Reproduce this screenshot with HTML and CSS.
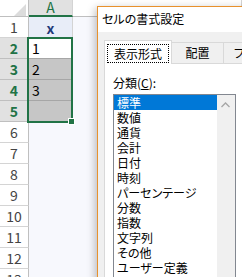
FILE: index.html
```html
<!DOCTYPE html>
<html>

<head>
    <meta charset="utf-8">
    <link rel="stylesheet" href="styles.css">
</head>

<body>
    <div class="sheet">
        <div class="corner">
            <svg width="12" height="12" viewBox="0 0 12 12"><polygon points="12,0 12,12 0,12" fill="#dcdcdc" /></svg>
        </div>
        <div class="col-head col-head-active">A</div>
        <div class="col-head"></div>

        <div class="row-head">1</div>
        <div class="cell cell-x">x</div>
        <div class="cell"></div>

        <div class="row-head row-head-active">2</div>
        <div class="cell cell-current">1</div>
        <div class="cell"></div>

        <div class="row-head row-head-active">3</div>
        <div class="cell cell-selected">2</div>
        <div class="cell"></div>

        <div class="row-head row-head-active">4</div>
        <div class="cell cell-selected">3</div>
        <div class="cell"></div>

        <div class="row-head row-head-active">5</div>
        <div class="cell cell-selected cell-last"></div>
        <div class="cell"></div>

        <div class="row-head">6</div>
        <div class="cell"></div>
        <div class="cell"></div>

        <div class="row-head">7</div>
        <div class="cell"></div>
        <div class="cell"></div>

        <div class="row-head">8</div>
        <div class="cell"></div>
        <div class="cell"></div>

        <div class="row-head">9</div>
        <div class="cell"></div>
        <div class="cell"></div>

        <div class="row-head">10</div>
        <div class="cell"></div>
        <div class="cell"></div>

        <div class="row-head">11</div>
        <div class="cell"></div>
        <div class="cell"></div>

        <div class="row-head">12</div>
        <div class="cell"></div>
        <div class="cell"></div>

        <div class="row-head">13</div>
        <div class="cell"></div>
        <div class="cell"></div>
    </div>

    <!-- selection border A2:A5 sits over the cells -->
    <div class="selection"><span class="fill-handle"></span></div>

    <div class="dialog">
        <div class="dialog-title">セルの書式設定</div>
        <div class="tabs">
            <div class="tab tab-selected"><span class="tab-focus">表示形式</span></div>
            <div class="tab tab-align">配置</div>
            <div class="tab">フォント</div>
        </div>
        <div class="tab-page">
            <div class="field-label">分類(<u>C</u>):</div>
            <div class="listbox">
                <ul class="list-items">
                    <li class="selected">標準</li>
                    <li>数値</li>
                    <li>通貨</li>
                    <li>会計</li>
                    <li>日付</li>
                    <li>時刻</li>
                    <li>パーセンテージ</li>
                    <li>分数</li>
                    <li>指数</li>
                    <li>文字列</li>
                    <li>その他</li>
                    <li>ユーザー定義</li>
                </ul>
                <div class="scrollbar">
                    <svg width="18" height="17" viewBox="0 0 18 17"><polyline points="4.5,12 8.5,8 12.5,12" fill="none" stroke="#a6a6a6" stroke-width="1.3" /></svg>
                </div>
            </div>
        </div>
    </div>
</body>
</html>
```

FILE: styles.css
```css
body {
    margin: 0;
    width: 242px;
    height: 277px;
    overflow: hidden;
    position: relative;
    background-color: #f7f8fd;
    font-family: "Noto Sans CJK JP", sans-serif;
}

/* spreadsheet */

.sheet {
    display: grid;
    grid-template-columns: 29px 44px 1fr;
    grid-template-rows: 17px repeat(13, 21px);
}

.corner {
    display: flex;
    justify-content: flex-end;
    align-items: flex-end;
    padding-right: 2px;
    background-color: #fff;
    border-right: 1px solid #bfbfbf;
    border-bottom: 1px solid #bfbfbf;
}

.col-head {
    background-color: #fff;
    border-right: 1px solid #d4d4d4;
    border-bottom: 1px solid #bfbfbf;
    color: #444;
    font-size: 14px;
    line-height: 15px;
    text-align: center;
}

.col-head-active {
    background-color: #e1e1e1;
    color: #217346;
    border-bottom: 2px solid #217346;
}

.row-head {
    background-color: #fff;
    border-right: 1px solid #bfbfbf;
    border-bottom: 1px solid #d4d4d4;
    color: #444;
    font-size: 14px;
    line-height: 20px;
    text-align: center;
}

.row-head-active {
    background-color: #e1e1e1;
    border-bottom-color: #bfbfbf;
    color: #217346;
    font-weight: bold;
}

.cell {
    font-size: 14px;
    line-height: 20px;
    padding-left: 3px;
    color: #000;
}

.cell-x {
    background-color: #e8edf8;
    border-right: 1px solid #d4d4d4;
    color: #1f3a7a;
    font-weight: bold;
    text-align: center;
    padding-left: 0;
    line-height: 22px;
}

.cell-current {
    background-color: #fff;
    border-bottom: 1px solid #a6a6a6;
}

.cell-selected {
    background-color: #c6c6c6;
    border-bottom: 1px solid #a6a6a6;
}

.cell-last {
    border-bottom: none;
}

.selection {
    position: absolute;
    left: 27px;
    top: 37px;
    width: 46px;
    height: 86px;
    box-sizing: border-box;
    border: 2px solid #217346;
}

.fill-handle {
    position: absolute;
    right: -4px;
    bottom: -4px;
    width: 5px;
    height: 5px;
    background-color: #217346;
    border: 1px solid #fff;
}

/* format cells dialog */

.dialog {
    position: absolute;
    left: 97px;
    top: 6px;
    width: 200px;
    height: 300px;
    border: 1px solid #e8912c;
    background-color: #f0f0f0;
    box-shadow: -2px 2px 8px rgba(0, 0, 0, 0.25);
    font-size: 12px;
    font-feature-settings: "palt";
    color: #000;
}

.dialog-title {
    height: 25px;
    line-height: 23px;
    padding-left: 4px;
    background-color: #fff;
}

.tabs {
    display: flex;
    align-items: flex-end;
    padding: 8px 0 0 6px;
}

.tab {
    box-sizing: border-box;
    height: 21px;
    line-height: 20px;
    padding: 0 10px;
    border-top: 1px solid #d9d9d9;
    border-right: 1px solid #d9d9d9;
    white-space: nowrap;
}

.tab-align {
    width: 52px;
    padding: 0;
    text-align: center;
}

.tab-selected {
    position: relative;
    z-index: 1;
    width: 68px;
    height: 24px;
    margin-bottom: -1px;
    padding: 3px 2px 0;
    border: 1px solid #d9d9d9;
    border-bottom: none;
    background-color: #fff;
}

.tab-focus {
    display: block;
    border: 1px dotted #000;
    line-height: 17px;
    text-align: center;
}

.tab-page {
    height: 250px;
    margin-left: 6px;
    padding: 11px 0 0 8px;
    border-top: 1px solid #d9d9d9;
    border-left: 1px solid #d9d9d9;
    background-color: #fff;
}

.field-label {
    line-height: 16px;
    margin-bottom: 3px;
}

.listbox {
    display: flex;
    box-sizing: border-box;
    width: 123px;
    height: 200px;
    border: 1px solid #828790;
    background-color: #fff;
}

.list-items {
    flex: 1;
    margin: 0;
    padding: 0;
    list-style: none;
}

.list-items li {
    height: 15px;
    line-height: 15px;
    padding-left: 3px;
    white-space: nowrap;
}

.list-items .selected {
    background-color: #0078d7;
    color: #fff;
}

.scrollbar {
    width: 18px;
    background-color: #f0f0f0;
}

.scrollbar svg {
    display: block;
}
```
